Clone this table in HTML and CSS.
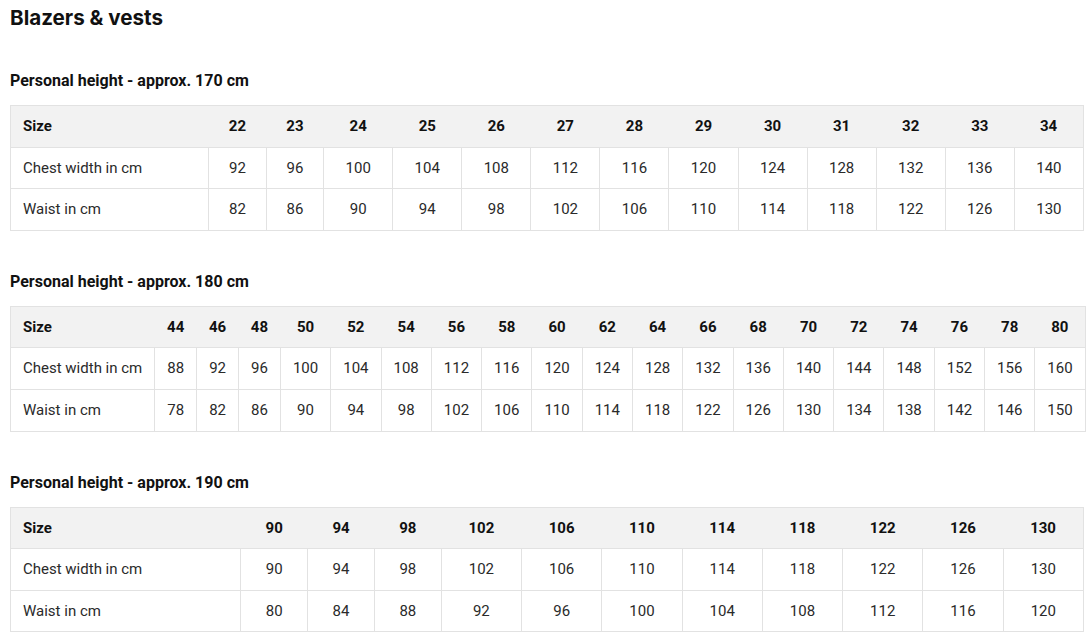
FILE: index.html
```html
<!DOCTYPE html>
<html lang="en">
<head>
<meta charset="utf-8">
<title>Blazers &amp; vests</title>
<link rel="stylesheet" href="styles.css">
</head>
<body>
<h1 class="title">Blazers &amp; vests</h1>

<section class="block">
  <h2 class="subtitle">Personal height - approx. 170 cm</h2>
  <table class="sizes">
    <thead>
      <tr><th>Size</th><th>22</th><th>23</th><th>24</th><th>25</th><th>26</th><th>27</th><th>28</th><th>29</th><th>30</th><th>31</th><th>32</th><th>33</th><th>34</th></tr>
    </thead>
    <tbody>
      <tr><td>Chest width in cm</td><td>92</td><td>96</td><td>100</td><td>104</td><td>108</td><td>112</td><td>116</td><td>120</td><td>124</td><td>128</td><td>132</td><td>136</td><td>140</td></tr>
      <tr><td>Waist in cm</td><td>82</td><td>86</td><td>90</td><td>94</td><td>98</td><td>102</td><td>106</td><td>110</td><td>114</td><td>118</td><td>122</td><td>126</td><td>130</td></tr>
    </tbody>
  </table>
</section>

<section class="block">
  <h2 class="subtitle">Personal height - approx. 180 cm</h2>
  <table class="sizes">
    <thead>
      <tr><th>Size</th><th>44</th><th>46</th><th>48</th><th>50</th><th>52</th><th>54</th><th>56</th><th>58</th><th>60</th><th>62</th><th>64</th><th>66</th><th>68</th><th>70</th><th>72</th><th>74</th><th>76</th><th>78</th><th>80</th></tr>
    </thead>
    <tbody>
      <tr><td>Chest width in cm</td><td>88</td><td>92</td><td>96</td><td>100</td><td>104</td><td>108</td><td>112</td><td>116</td><td>120</td><td>124</td><td>128</td><td>132</td><td>136</td><td>140</td><td>144</td><td>148</td><td>152</td><td>156</td><td>160</td></tr>
      <tr><td>Waist in cm</td><td>78</td><td>82</td><td>86</td><td>90</td><td>94</td><td>98</td><td>102</td><td>106</td><td>110</td><td>114</td><td>118</td><td>122</td><td>126</td><td>130</td><td>134</td><td>138</td><td>142</td><td>146</td><td>150</td></tr>
    </tbody>
  </table>
</section>

<section class="block">
  <h2 class="subtitle">Personal height - approx. 190 cm</h2>
  <table class="sizes">
    <thead>
      <tr><th>Size</th><th>90</th><th>94</th><th>98</th><th>102</th><th>106</th><th>110</th><th>114</th><th>118</th><th>122</th><th>126</th><th>130</th></tr>
    </thead>
    <tbody>
      <tr><td>Chest width in cm</td><td>90</td><td>94</td><td>98</td><td>102</td><td>106</td><td>110</td><td>114</td><td>118</td><td>122</td><td>126</td><td>130</td></tr>
      <tr><td>Waist in cm</td><td>80</td><td>84</td><td>88</td><td>92</td><td>96</td><td>100</td><td>104</td><td>108</td><td>112</td><td>116</td><td>120</td></tr>
    </tbody>
  </table>
</section>
</body>
</html>
```

FILE: styles.css
```css
html, body {
  background: #ffffff;
}
body {
  margin: 0;
  padding: 6px 5px 0 10px;
  font-family: Roboto, "Liberation Sans", Arial, sans-serif;
  color: #222222;
}
.title {
  font-family: Inter, "Liberation Sans", Arial, sans-serif;
  font-size: 20.6px;
  font-weight: 700;
  line-height: 24px;
  margin: 0 0 41px 0;
  color: #111111;
}
.block {
  margin-bottom: 41px;
}
.subtitle {
  font-size: 16px;
  font-weight: 700;
  line-height: 20px;
  margin: 0 0 14px 0;
  color: #111111;
}
.sizes {
  width: 100%;
  border-collapse: collapse;
  border: 1px solid #e2e2e2;
  font-size: 15px;
  line-height: 16.6px;
}
.sizes th,
.sizes td {
  padding: 12px 12px;
  text-align: center;
  white-space: nowrap;
}
.sizes th {
  background: #f2f2f2;
  font-weight: 700;
  color: #111111;
  border-bottom: 1px solid #e2e2e2;
}
.sizes td {
  border: 1px solid #e2e2e2;
  color: #2a2a2a;
}
.sizes th:first-child,
.sizes td:first-child {
  text-align: left;
}
```
